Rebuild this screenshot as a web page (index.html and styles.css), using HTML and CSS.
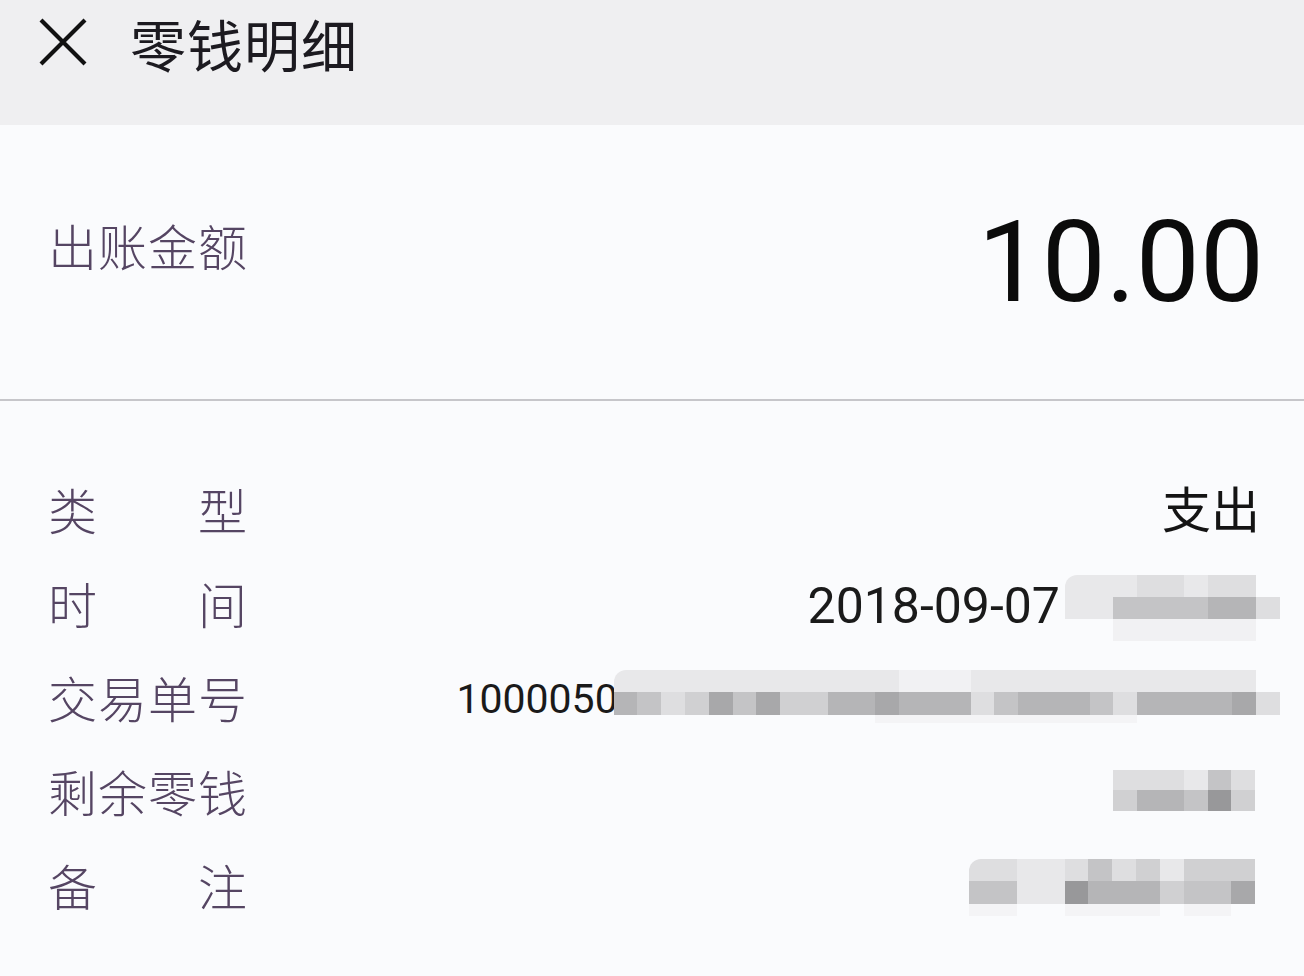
FILE: index.html
```html
<!DOCTYPE html>
<html lang="zh-CN">
<head>
<meta charset="utf-8">
<title>零钱明细</title>
<link rel="stylesheet" href="styles.css">
</head>
<body>
<div class="page">
  <header class="header">
    <svg class="close" viewBox="0 0 50 50" width="50" height="50" aria-hidden="true">
      <path d="M3 3 L47 47 M47 3 L3 47" stroke="#111" stroke-width="4.2" fill="none"/>
    </svg>
    <h1 class="title">零钱明细</h1>
  </header>

  <section class="amount">
    <div class="amount-label">出账金额</div>
    <div class="amount-value">10.00</div>
  </section>

  <div class="divider"></div>

  <section class="list">
    <div class="row">
      <div class="label"><span>类</span><span>型</span></div>
      <div class="value"><span class="txt">支出</span></div>
    </div>
    <div class="row">
      <div class="label"><span>时</span><span>间</span></div>
      <div class="value">
        <span class="num">2018-09-07</span>
        <div class="mosaic m-time">
          <i class="s1 tl"></i><i class="s1"></i><i class="s1"></i><i class="s2"></i><i class="s2"></i><i class="s1"></i><i class="s2"></i><i class="s2"></i><i></i>
          <i class="s1"></i><i class="s1"></i><i class="s4"></i><i class="s4"></i><i class="s4"></i><i class="s4"></i><i class="s5"></i><i class="s5"></i><i class="s2"></i>
          <i></i><i></i><i class="s0"></i><i class="s0"></i><i class="s0"></i><i class="s0"></i><i class="s0"></i><i class="s0"></i><i></i>
        </div>
      </div>
    </div>
    <div class="row">
      <div class="label"><span>交</span><span>易</span><span>单</span><span>号</span></div>
      <div class="value">
        <span class="num small">1000050</span>
        <div class="mosaic m-trade">
          <i class="s1 tl"></i><i class="s1"></i><i class="s1"></i><i class="s1"></i><i class="s1"></i><i class="s1"></i><i class="s1"></i><i class="s1"></i><i class="s1"></i><i class="s1"></i><i class="s1"></i><i class="s1"></i><i class="s0"></i><i class="s0"></i><i class="s0"></i><i class="s1"></i><i class="s1"></i><i class="s1"></i><i class="s1"></i><i class="s1"></i><i class="s1"></i><i class="s1"></i><i class="s1"></i><i class="s1"></i><i class="s1"></i><i class="s1"></i><i class="s1"></i><i></i>
          <i class="s5"></i><i class="s4"></i><i class="s2"></i><i class="s3"></i><i class="s6"></i><i class="s4"></i><i class="s6"></i><i class="s3"></i><i class="s3"></i><i class="s5"></i><i class="s5"></i><i class="s6"></i><i class="s5"></i><i class="s5"></i><i class="s5"></i><i class="s2"></i><i class="s4"></i><i class="s5"></i><i class="s5"></i><i class="s5"></i><i class="s4"></i><i class="s2"></i><i class="s5"></i><i class="s5"></i><i class="s5"></i><i class="s5"></i><i class="s6"></i><i class="s2"></i>
          <i></i><i></i><i></i><i></i><i></i><i></i><i></i><i></i><i></i><i></i><i></i><i class="f0"></i><i class="f0"></i><i class="f0"></i><i class="f0"></i><i class="f0"></i><i class="f0"></i><i class="f0"></i><i class="f0"></i><i class="f0"></i><i class="f0"></i><i class="f0"></i><i></i><i></i><i></i><i></i><i></i><i></i>
        </div>
      </div>
    </div>
    <div class="row">
      <div class="label"><span>剩</span><span>余</span><span>零</span><span>钱</span></div>
      <div class="value">
        <div class="mosaic m-rest">
          <i class="s2"></i><i class="s2"></i><i class="s2"></i><i class="s1"></i><i class="s4"></i><i class="s2"></i>
          <i class="s3"></i><i class="s5"></i><i class="s5"></i><i class="s4"></i><i class="s7"></i><i class="s3"></i>
        </div>
      </div>
    </div>
    <div class="row">
      <div class="label"><span>备</span><span>注</span></div>
      <div class="value">
        <div class="mosaic m-note">
          <i class="s2 tl"></i><i class="s2"></i><i class="s1"></i><i class="s1"></i><i class="s2"></i><i class="s4"></i><i class="s2"></i><i class="s3"></i><i class="s1"></i><i class="s3"></i><i class="s3"></i><i class="s3"></i>
          <i class="s4"></i><i class="s4"></i><i class="s1"></i><i class="s1"></i><i class="s7"></i><i class="s5"></i><i class="s5"></i><i class="s5"></i><i class="s3"></i><i class="s4"></i><i class="s4"></i><i class="s6"></i>
          <i class="f0"></i><i class="f0"></i><i></i><i></i><i class="f0"></i><i class="f0"></i><i class="f0"></i><i class="f0"></i><i></i><i class="f0"></i><i class="f0"></i><i></i>
        </div>
      </div>
    </div>
  </section>
</div>
</body>
</html>
```

FILE: styles.css
```css
html, body {
  margin: 0;
  padding: 0;
}
body {
  background: #fafbfd;
  font-family: "Noto Sans CJK SC", sans-serif;
}
.page {
  width: 1304px;
  height: 976px;
  background: #fafbfd;
  overflow: hidden;
}
.header {
  display: flex;
  align-items: center;
  height: 86px;
  padding: 0 0 39px 38px;
  background: #efeff1;
}
.close {
  display: block;
  width: 50px;
  height: 50px;
  margin-top: -2px;
}
.title {
  margin: 0 0 0 42px;
  font-size: 56px;
  font-weight: 400;
  color: #1c1a20;
  line-height: 1;
  letter-spacing: 1px;
}
.amount {
  display: flex;
  align-items: center;
  justify-content: space-between;
  height: 274px;
  padding: 0 40px 0 48px;
}
.amount-label {
  font-size: 49px;
  font-weight: 300;
  color: #554563;
  line-height: 1;
  margin-bottom: 36px;
  letter-spacing: 1px;
}
.amount-value {
  font-family: Roboto, sans-serif;
  font-size: 114px;
  font-weight: 400;
  color: #0b0b0b;
  line-height: 1;
}
.divider {
  height: 2px;
  background: #c6c6ca;
}
.list {
  padding-top: 60px;
}
.row {
  display: flex;
  align-items: center;
  height: 94px;
  padding: 0 44px 0 48px;
}
.label {
  width: 199px;
  display: flex;
  justify-content: space-between;
  font-size: 49px;
  font-weight: 300;
  color: #554563;
  line-height: 1;
}
.value {
  margin-left: auto;
  display: flex;
  align-items: center;
  font-family: Roboto, "Noto Sans CJK SC", sans-serif;
  font-size: 49px;
  color: #141414;
  line-height: 1;
}
.txt {
  margin-top: 6px;
}
.num {
  font-family: Roboto, sans-serif;
  font-size: 50px;
  color: #1a1a1a;
  margin-top: 8px;
}
.num.small {
  font-size: 41px;
  margin-top: 6px;
}
.mosaic {
  display: grid;
}
.mosaic i {
  display: block;
}
.mosaic .tl {
  border-top-left-radius: 12px;
}
.m-time {
  grid-template-columns: repeat(9, 23.9px);
  grid-template-rows: 22px 22px 22px;
  margin-left: 5px;
  margin-right: -20px;
  margin-top: 12px;
}
.m-trade {
  grid-template-columns: repeat(28, 23.8px);
  grid-template-rows: 22px 23px 8px;
  margin-left: -4px;
  margin-right: -20px;
}
.m-rest {
  grid-template-columns: repeat(6, 23.7px);
  grid-template-rows: 20px 21px;
  margin-right: 5px;
}
.m-note {
  grid-template-columns: repeat(12, 23.8px);
  grid-template-rows: 22px 23px 12px;
  margin-right: 5px;
  margin-top: 6px;
}
.f0 { background: #f4f4f6; }
.s0 { background: #f1f1f3; }
.s1 { background: #e8e8ea; }
.s2 { background: #dedee0; }
.s3 { background: #d0d0d2; }
.s4 { background: #c4c4c6; }
.s5 { background: #b5b5b7; }
.s6 { background: #a8a8aa; }
.s7 { background: #98989a; }
```
